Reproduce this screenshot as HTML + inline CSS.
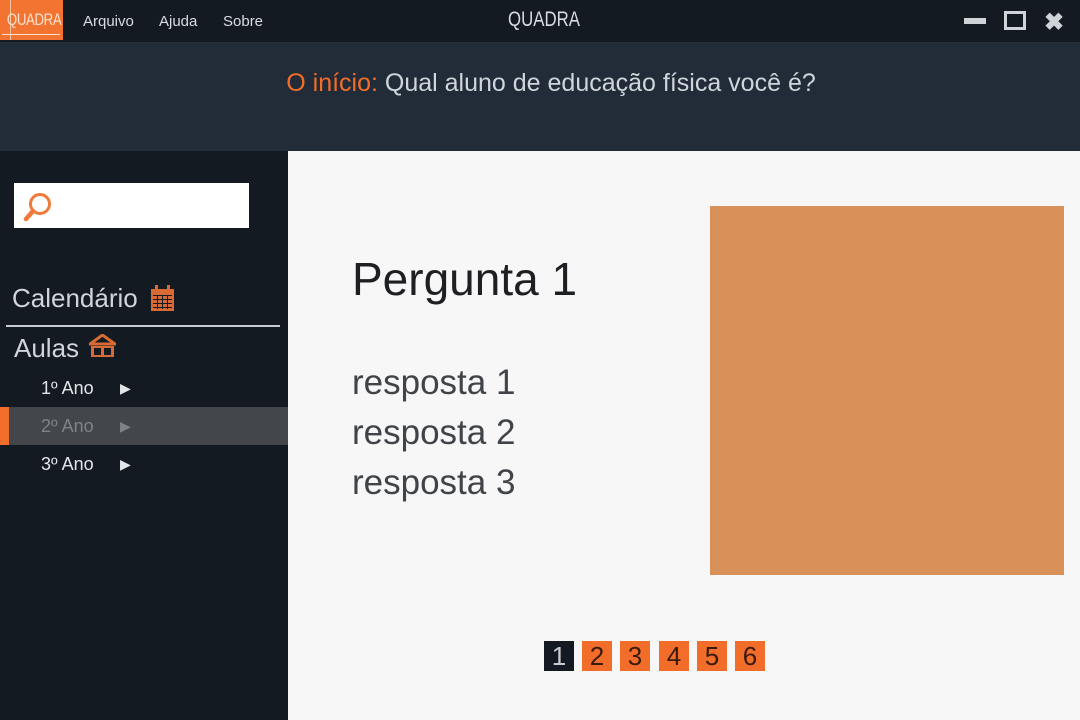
<!DOCTYPE html>
<html><head><meta charset="utf-8"><style>
*{margin:0;padding:0;box-sizing:border-box}
body{width:1080px;height:720px;overflow:hidden;font-family:"Liberation Sans",sans-serif;background:#f7f7f7;position:relative}
.abs{position:absolute}
#top{left:0;top:0;width:1080px;height:42px;background:#141a21}
#hdr{left:0;top:42px;width:1080px;height:109px;background:#222c38}
#side{left:0;top:151px;width:288px;height:569px;background:#141a21}
.menu{color:#d8dde2;font-size:15px;top:13px}
.pg{top:641px;width:30px;height:30px;background:#f26d2a;color:#3a1a0a;font-size:26px;text-align:center;line-height:30px}
</style></head><body>
<div id="top" class="abs"></div>
<div class="abs" style="left:0;top:0;width:63px;height:40px;background:#f27430"></div>
<div class="abs" style="left:0;top:10px;width:63px;color:#fde2d0;font-size:17px;text-align:center;transform:scaleX(0.78);letter-spacing:-0.5px">QUADRA</div>
<div class="abs" style="left:2px;top:34px;width:58px;height:1px;background:#fde2d0"></div>
<div class="abs" style="left:10px;top:0;width:1px;height:40px;background:#fbc6a4"></div>
<div class="abs menu" style="left:83px">Arquivo</div>
<div class="abs menu" style="left:159px">Ajuda</div>
<div class="abs menu" style="left:223px">Sobre</div>
<div class="abs" style="left:496px;top:8px;width:96px;text-align:center;color:#d8dde2;font-size:21px;transform:scaleX(0.8)">QUADRA</div>
<div class="abs" style="left:964px;top:18px;width:22px;height:6px;background:#cfd4d9"></div>
<div class="abs" style="left:1004px;top:11px;width:22px;height:19px;border:3px solid #cfd4d9"></div>
<div class="abs" style="left:1044px;top:8px;color:#cfd4d9;font-size:24px;font-weight:bold">✖</div>
<div id="hdr" class="abs"></div>
<div class="abs" style="left:0;top:69px;width:1102px;text-align:center;font-size:25px;color:#cfd5db"><span style="color:#f26d2a">O início:</span> Qual aluno de educação física você é?</div>
<div id="side" class="abs"></div>
<div class="abs" style="left:14px;top:183px;width:235px;height:45px;background:#fff"></div>
<svg class="abs" style="left:22px;top:189px" width="34" height="34" viewBox="0 0 34 34"><circle cx="18" cy="15" r="9.5" fill="none" stroke="#f07a3a" stroke-width="3"/><line x1="11" y1="22" x2="4" y2="30" stroke="#f07a3a" stroke-width="4.5" stroke-linecap="round"/></svg>
<div class="abs" style="left:12px;top:283px;font-size:26px;color:#cfd5db">Calendário</div>
<svg class="abs" style="left:151px;top:285px" width="23" height="27" viewBox="0 0 23 27"><rect x="0" y="4" width="23" height="22" fill="#d86a35"/><rect x="4" y="0" width="3" height="6" fill="#d86a35"/><rect x="16" y="0" width="3" height="6" fill="#d86a35"/><g fill="#141a21"><rect x="2" y="10" width="19" height="1"/><rect x="2" y="14" width="19" height="1"/><rect x="2" y="18" width="19" height="1"/><rect x="2" y="22" width="19" height="1"/><rect x="6" y="10" width="1" height="14"/><rect x="11" y="10" width="1" height="14"/><rect x="16" y="10" width="1" height="14"/></g></svg>
<div class="abs" style="left:6px;top:325px;width:274px;height:2px;background:#c8ccd0"></div>
<div class="abs" style="left:14px;top:333px;font-size:26px;color:#cfd5db">Aulas</div>
<svg class="abs" style="left:89px;top:334px" width="27" height="24" viewBox="0 0 27 24"><path d="M13.5 1 L1 10 H26 Z" fill="none" stroke="#d86a35" stroke-width="3"/><rect x="2" y="12" width="23" height="11" fill="#d86a35"/><rect x="5" y="14" width="7" height="7" fill="#141a21"/><rect x="15" y="14" width="7" height="7" fill="#141a21"/></svg>
<div class="abs" style="left:0;top:407px;width:288px;height:38px;background:#43464b"></div>
<div class="abs" style="left:0;top:407px;width:9px;height:38px;background:#f26d2a"></div>
<div class="abs" style="left:41px;top:378px;font-size:18px;color:#e3e6e9">1º Ano</div>
<div class="abs" style="left:41px;top:416px;font-size:18px;color:#7f8388">2º Ano</div>
<div class="abs" style="left:41px;top:454px;font-size:18px;color:#e3e6e9">3º Ano</div>
<div class="abs" style="left:120px;top:380px;font-size:14px;color:#e3e6e9">▶</div>
<div class="abs" style="left:120px;top:418px;font-size:14px;color:#7f8388">▶</div>
<div class="abs" style="left:120px;top:456px;font-size:14px;color:#e3e6e9">▶</div>
<div class="abs" style="left:352px;top:252px;font-size:46px;color:#1d1f22">Pergunta 1</div>
<div class="abs" style="left:352px;top:358px;font-size:35px;color:#404448;line-height:50px">resposta 1<br>resposta 2<br>resposta 3</div>
<div class="abs" style="left:710px;top:206px;width:354px;height:369px;background:#d9915a"></div>
<div class="abs pg" style="left:544px;background:#141a21;color:#c8ccd0">1</div>
<div class="abs pg" style="left:582px">2</div>
<div class="abs pg" style="left:620px">3</div>
<div class="abs pg" style="left:659px">4</div>
<div class="abs pg" style="left:697px">5</div>
<div class="abs pg" style="left:735px">6</div>
</body></html>
